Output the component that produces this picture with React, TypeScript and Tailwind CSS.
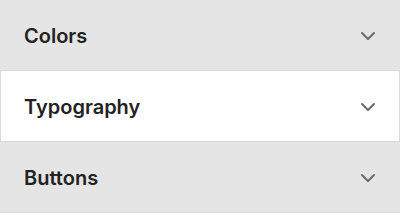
import { ChevronDown } from "lucide-react";

const sections = [
  { title: "Colors", open: false },
  { title: "Typography", open: true },
  { title: "Buttons", open: false },
];

export default function App() {
  return (
    <div className="w-[400px] h-[213px] overflow-hidden bg-[#e5e5e5] font-[Inter,sans-serif]">
      {sections.map((s) => (
        <div
          key={s.title}
          className={
            s.open
              ? "flex items-center justify-between h-[71px] pt-px pl-[23px] pr-[19px] bg-white border-x border-b border-[#d9d9d9] text-[#222]"
              : "flex items-center justify-between h-[71px] pt-px px-6 pr-5 bg-[#e5e5e5] border-b border-[#d9d9d9] text-[#222]"
          }
        >
          <span className="text-[20px] font-semibold">{s.title}</span>
          <ChevronDown className="w-6 h-6 text-[#6b6b6b]" strokeWidth={2} />
        </div>
      ))}
    </div>
  );
}
